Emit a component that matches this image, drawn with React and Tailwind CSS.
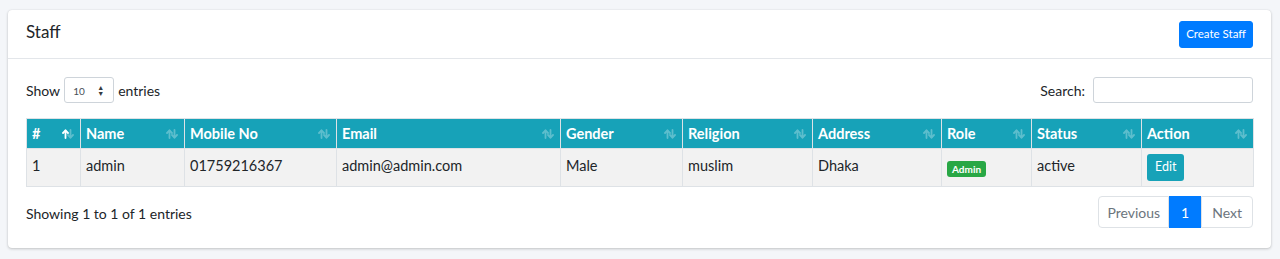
import React from "react";

const cols = [
  { name: "#", w: 54, active: true },
  { name: "Name", w: 104 },
  { name: "Mobile No", w: 152 },
  { name: "Email", w: 224 },
  { name: "Gender", w: 122 },
  { name: "Religion", w: 130 },
  { name: "Address", w: 129 },
  { name: "Role", w: 90 },
  { name: "Status", w: 110 },
  { name: "Action", w: 112 },
];

function SortIcon({ active }) {
  return (
    <svg width="12" height="10" viewBox="0 0 12 10" className="mr-[1px]">
      <g stroke="white" strokeWidth="1.8" fill="none" strokeLinecap="round" strokeLinejoin="round">
        <g opacity={active ? 1 : 0.3}>
          <path d="M3.5 9V1.5" />
          <path d="M1 4L3.5 1.5L6 4" />
        </g>
        <g opacity="0.3">
          <path d="M8.5 1V8.5" />
          <path d="M6 6L8.5 8.5L11 6" />
        </g>
      </g>
    </svg>
  );
}

export default function App() {
  return (
    <div className="min-h-[259px] bg-[#f4f6f9] pt-[10px] pl-[8px] pr-[9px]" style={{ fontFamily: "Lato, 'Liberation Sans', sans-serif" }}>
      <div className="bg-white rounded-[4px] shadow-[0_0_1px_rgba(0,0,0,0.125),0_1px_3px_rgba(0,0,0,0.2)] text-[#212529]">
        <div className="flex items-center justify-between px-[18px] h-[49px] border-b border-[#e3e6ea]">
          <h3 className="text-[17px] text-[#212529] -mt-[4px]">Staff</h3>
          <button className="h-[27px] px-[6px] rounded-[3px] bg-[#007bff] text-white text-[11.5px] border border-[#007bff]">Create Staff</button>
        </div>
        <div className="px-[18px] pt-[18px] pb-[20px]">
          <div className="flex items-center justify-between h-[26px] text-[14px]">
            <div className="flex items-center gap-[4px]">
              <span>Show</span>
              <div className="w-[50px] h-[26px] border border-[#ced4da] rounded-[3px] flex items-center justify-between pl-[8px] pr-[9px]">
                <span className="text-[10px] text-[#495057] mt-[2px]">10</span>
                <span className="flex flex-col text-[7px] leading-[6px] text-[#343a40]">
                  <span>▲</span>
                  <span>▼</span>
                </span>
              </div>
              <span>entries</span>
            </div>
            <div className="flex items-center gap-[8px]">
              <span>Search:</span>
              <input className="w-[160px] h-[26px] border border-[#ced4da] rounded-[3px] outline-none" />
            </div>
          </div>
          <table className="mt-[15px] w-full border-collapse border border-[#dee2e6] text-[14.5px]" style={{ tableLayout: "fixed" }}>
            <colgroup>
              {cols.map((c) => (
                <col key={c.name} style={{ width: c.w }} />
              ))}
            </colgroup>
            <thead>
              <tr className="bg-[#17a2b8] text-white h-[30px]">
                {cols.map((c) => (
                  <th key={c.name} className="border border-[#dee2e6] px-[5px] text-left font-bold">
                    <div className="flex items-center justify-between">
                      <span>{c.name}</span>
                      <SortIcon active={c.active} />
                    </div>
                  </th>
                ))}
              </tr>
            </thead>
            <tbody>
              <tr className="bg-[#f2f2f2] h-[38px] align-top">
                <td className="border border-[#dee2e6] px-[5px] pt-[6px]">1</td>
                <td className="border border-[#dee2e6] px-[5px] pt-[6px]">admin</td>
                <td className="border border-[#dee2e6] px-[5px] pt-[6px]">01759216367</td>
                <td className="border border-[#dee2e6] px-[5px] pt-[6px]">admin@admin.com</td>
                <td className="border border-[#dee2e6] px-[5px] pt-[6px]">Male</td>
                <td className="border border-[#dee2e6] px-[5px] pt-[6px]">muslim</td>
                <td className="border border-[#dee2e6] px-[5px] pt-[6px]">Dhaka</td>
                <td className="border border-[#dee2e6] px-[5px] pt-[8px]">
                  <span className="inline-block bg-[#28a745] text-white text-[10px] font-bold rounded-[3px] px-[5px] leading-[16px]">Admin</span>
                </td>
                <td className="border border-[#dee2e6] px-[5px] pt-[6px]">active</td>
                <td className="border border-[#dee2e6] px-[5px] pt-[5px]">
                  <button className="bg-[#17a2b8] text-white text-[12.5px] rounded-[3px] h-[27px] px-[8px] mb-[4px]">Edit</button>
                </td>
              </tr>
            </tbody>
          </table>
          <div className="flex items-center justify-between mt-[9px] text-[14px]">
            <span className="mt-[2px]">Showing 1 to 1 of 1 entries</span>
            <div className="flex h-[32px] text-[14px]">
              <span className="flex items-center px-[8px] border border-[#dee2e6] rounded-l-[4px] text-[#6c757d]">Previous</span>
              <span className="flex items-center px-[11px] bg-[#007bff] text-white border border-[#007bff]">1</span>
              <span className="flex items-center px-[10px] border border-[#dee2e6] rounded-r-[4px] text-[#6c757d]">Next</span>
            </div>
          </div>
        </div>
      </div>
    </div>
  );
}
